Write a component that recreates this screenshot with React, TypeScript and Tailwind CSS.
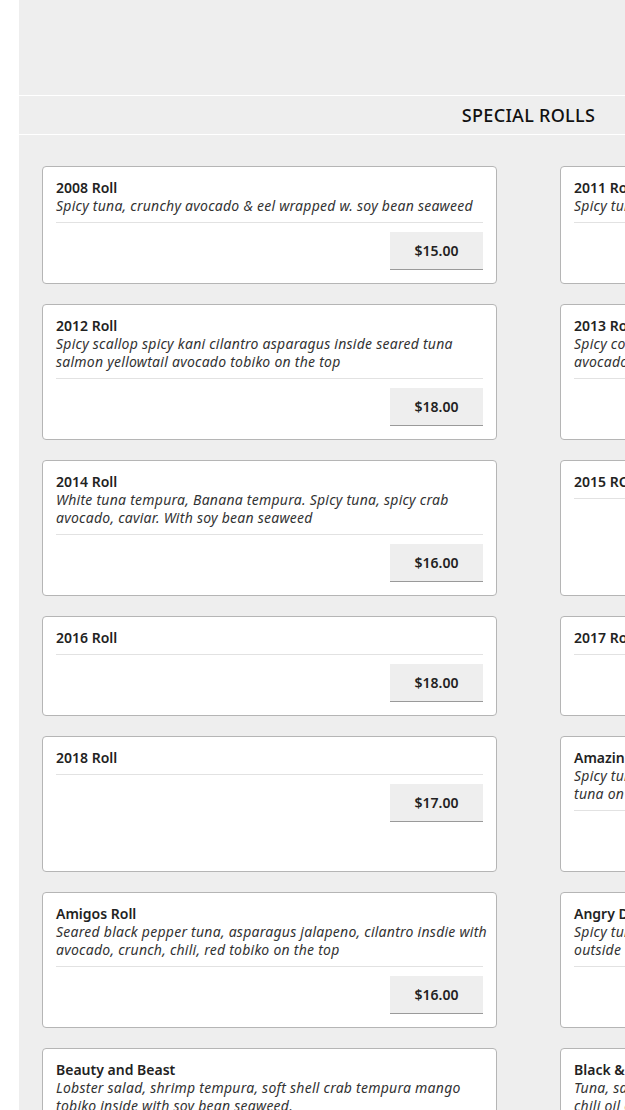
const left = [
  { name: "2008 Roll", desc: "Spicy tuna, crunchy avocado & eel wrapped w. soy bean seaweed", price: "$15.00" },
  { name: "2012 Roll", desc: "Spicy scallop spicy kani cilantro asparagus inside seared tuna salmon yellowtail avocado tobiko on the top", price: "$18.00" },
  { name: "2014 Roll", desc: "White tuna tempura, Banana tempura. Spicy tuna, spicy crab avocado, caviar. With soy bean seaweed", price: "$16.00" },
  { name: "2016 Roll", desc: "", price: "$18.00" },
  { name: "2018 Roll", desc: "", price: "$17.00" },
  { name: "Amigos Roll", desc: "Seared black pepper tuna, asparagus jalapeno, cilantro insdie with avocado, crunch, chili, red tobiko on the top", price: "$16.00" },
  { name: "Beauty and Beast", desc: "Lobster salad, shrimp tempura, soft shell crab tempura mango tobiko inside with soy bean seaweed.", price: "$18.00" },
];

const right = [
  { name: "2011 Roll", desc: "Spicy tuna, cucumber, mango with salmon on top", price: "$15.00" },
  { name: "2013 Roll", desc: "Spicy conch, shrimp tempura, cucumber, seared salmon, tuna avocado on the top", price: "$16.00" },
  { name: "2015 ROLL", desc: "", price: "$17.00" },
  { name: "2017 Roll", desc: "", price: "$18.00" },
  { name: "Amazing Roll", desc: "Spicy tuna, avocado, crunch inside, topped with seared black pepper tuna on the top", price: "$16.00" },
  { name: "Angry Dragon Roll", desc: "Spicy tuna, shrimp tempura, cucumber inside, eel and avocado outside", price: "$16.00" },
  { name: "Black & White Roll", desc: "Tuna, salmon, avocado inside, topped with white tuna, black tobiko, chili oil on the top", price: "$17.00" },
];

type Item = { name: string; desc: string; price: string };

function Card({ item }: { item: Item }) {
  return (
    <div className="flex flex-col rounded-[4px] border border-[#b5b5b5] bg-white pl-[13px] pr-[13px] pt-[12px] pb-[13px]">
      <div className="text-[14px] leading-[18px] font-semibold text-[#222]">{item.name}</div>
      {item.desc && (
        <div className="-mr-[14px] text-[14px] leading-[18px] tracking-[0.25px] italic text-[#333]">{item.desc}</div>
      )}
      <div className="mt-[7px] border-t border-[#e2e2e2]" />
      <div className="mt-[9px] flex justify-end">
        <div className="flex h-[38px] w-[93px] items-center justify-center border-b border-[#9a9a9a] bg-[#eeeeee] text-[14px] font-semibold text-[#222]">
          {item.price}
        </div>
      </div>
    </div>
  );
}

export default function App() {
  return (
    <div className="h-[1110px] w-full overflow-hidden bg-white" style={{ fontFamily: "'Noto Sans', sans-serif" }}>
      <div className="ml-[19px] min-h-full w-[1019px] bg-[#eeeeee]">
        <div className="h-[95px]" />
        <div className="border-y border-white py-[9px] text-center text-[18px] leading-[20px] tracking-[0.3px] font-medium text-[#111]">
          SPECIAL ROLLS
        </div>
        <div className="grid grid-cols-2 gap-x-[63px] gap-y-[20px] pl-[23px] pr-[23px] pt-[31px]">
          {left.map((l, i) => (
            <>
              <Card key={"l" + i} item={l} />
              <Card key={"r" + i} item={right[i]} />
            </>
          ))}
        </div>
      </div>
    </div>
  );
}
